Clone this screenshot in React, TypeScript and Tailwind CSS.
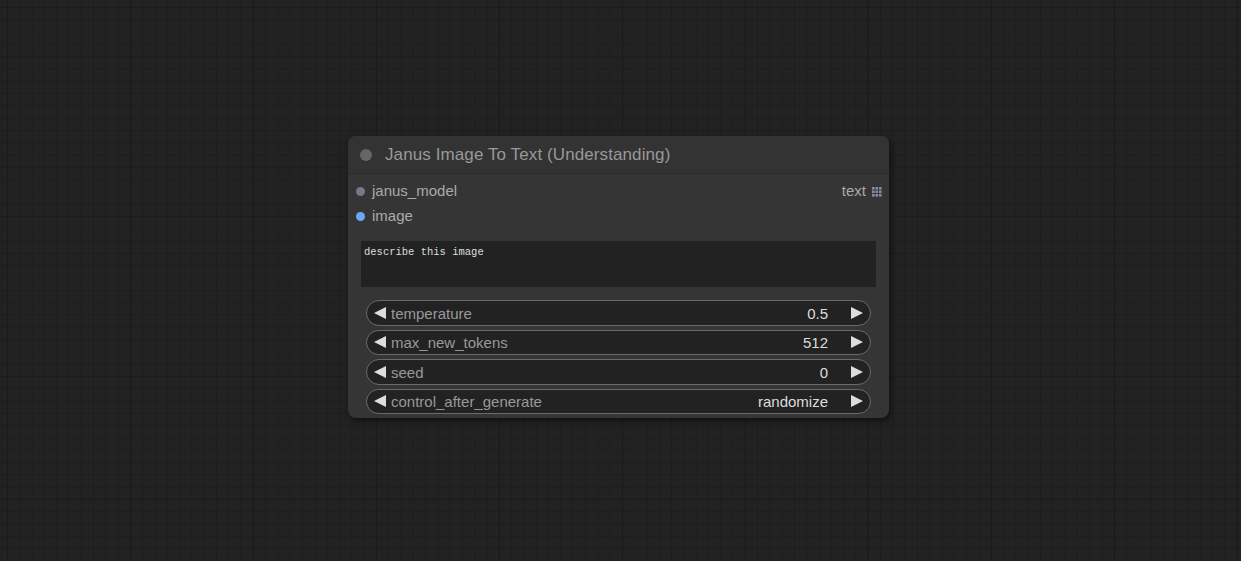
const widgets = [
  { name: "temperature", value: "0.5" },
  { name: "max_new_tokens", value: "512" },
  { name: "seed", value: "0" },
  { name: "control_after_generate", value: "randomize" },
];

const Widget = ({ name, value }: { name: string; value: string }) => {
  return (
    <div className="flex h-[25.5px] items-center rounded-full border border-[#6a6a6a] bg-[#222] pl-[7px] pr-[7px] text-[15px] leading-none">
      <svg width="12" height="12" viewBox="0 0 12 12">
        <polygon points="12,0 12,12 0,6" fill="#ddd" />
      </svg>
      <span className="ml-[5px] pt-[1px] text-[#999]">{name}</span>
      <span className="ml-auto pt-[1px] text-[#ddd]">{value}</span>
      <svg className="ml-[23px]" width="12" height="12" viewBox="0 0 12 12">
        <polygon points="0,0 0,12 12,6" fill="#ddd" />
      </svg>
    </div>
  );
};

export default function App() {
  return (
    <div
      className="relative h-[561px] w-full overflow-hidden bg-[#222] font-['Liberation_Sans',Arial,sans-serif]
        bg-[linear-gradient(to_right,#1a1a1a_1px,transparent_1px),linear-gradient(to_bottom,#1c1c1c_1px,transparent_1px),linear-gradient(to_right,#1d1d1d_1px,transparent_1px),linear-gradient(to_bottom,#1d1d1d_1px,transparent_1px)]
        [background-size:123px_123px,123px_123px,12.3px_12.3px,12.3px_12.3px]
        [background-position:7px_7px,7px_7px,7px_7px,7px_7px]"
    >
      <div className="absolute left-[348px] top-[136px] w-[541px] h-[282px] rounded-[8px] bg-[#353535] shadow-[2px_3px_6px_rgba(0,0,0,0.5)]">
        {/* title */}
        <div className="flex h-[38px] items-center rounded-t-[8px] border-b border-[#2c2c2c] bg-[#333]">
          <div className="ml-[12px] h-[12px] w-[12px] rounded-full bg-[#666]" />
          <span className="ml-[13px] text-[17px] tracking-[0.1px] text-[#999]">Janus Image To Text (Understanding)</span>
        </div>

        {/* slots */}
        <div className="relative mt-[5px] text-[15px] text-[#aaa]">
          <div className="flex h-[25px] items-center">
            <div className="ml-[8px] h-[9px] w-[9px] rounded-full bg-[#778]" />
            <span className="ml-[7px]">janus_model</span>
            <span className="ml-auto">text</span>
            <svg className="ml-[6px] mr-[7px]" width="10" height="10" viewBox="0 0 10 10">
              {[0, 3.5, 7].map((x) =>
                [0, 3.5, 7].map((y) => (
                  <rect key={`${x}-${y}`} x={x} y={y} width="2.6" height="2.6" fill="#8a8aa6" />
                ))
              )}
            </svg>
          </div>
          <div className="flex h-[25px] items-center">
            <div className="ml-[8px] h-[9px] w-[9px] rounded-full bg-[#6fa8f2]" />
            <span className="ml-[7px]">image</span>
          </div>
        </div>

        {/* prompt */}
        <div className="mx-[13px] mt-[12px] h-[46px] bg-[#222] px-[3px] pt-[6px] font-['Liberation_Mono',monospace] text-[10.5px] leading-none text-[#ddd]">
          describe this image
        </div>

        {/* widgets */}
        <div className="mx-[18px] mt-[13px] flex flex-col gap-[4px]">
          {widgets.map((w) => (
            <Widget key={w.name} name={w.name} value={w.value} />
          ))}
        </div>
      </div>
    </div>
  );
}
